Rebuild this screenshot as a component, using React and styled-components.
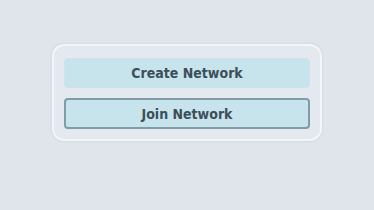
import React from "react";
import styled, { createGlobalStyle } from "styled-components";

const Global = createGlobalStyle`
  html, body { margin: 0; padding: 0; background: #dfe5eb; }
  body { width: 374px; height: 210px; overflow: hidden; font-family: "DejaVu Sans", Verdana, sans-serif; }
`;

const Page = styled.div`
  display: flex;
  justify-content: center;
  padding-top: 44px;
`;

const Panel = styled.div`
  box-sizing: border-box;
  width: 270px;
  display: flex;
  flex-direction: column;
  gap: 10px;
  padding: 12px 10px 10px;
  background: #e3e9ee;
  border: 2px solid #f3f6f8;
  border-radius: 12px;
  box-shadow: 0 0 2px rgba(160, 175, 190, 0.5);
`;

const Button = styled.button`
  box-sizing: border-box;
  height: ${(p) => (p.$active ? 31 : 30)}px;
  width: 100%;
  background: #c7e3eb;
  border: ${(p) => (p.$active ? "2px solid #7f9ca8" : "1px solid #d3e2e8")};
  border-radius: 4px;
  color: #3b4f5a;
  font-family: "DejaVu Sans Condensed", "DejaVu Sans", Verdana, sans-serif;
  font-stretch: condensed;
  font-weight: bold;
  font-size: 14px;
  display: flex;
  align-items: center;
  justify-content: center;
  padding: 0;
  cursor: pointer;
`;

export default function App() {
  return (
    <>
      <Global />
      <Page>
        <Panel>
          <Button>Create Network</Button>
          <Button $active>Join Network</Button>
        </Panel>
      </Page>
    </>
  );
}
